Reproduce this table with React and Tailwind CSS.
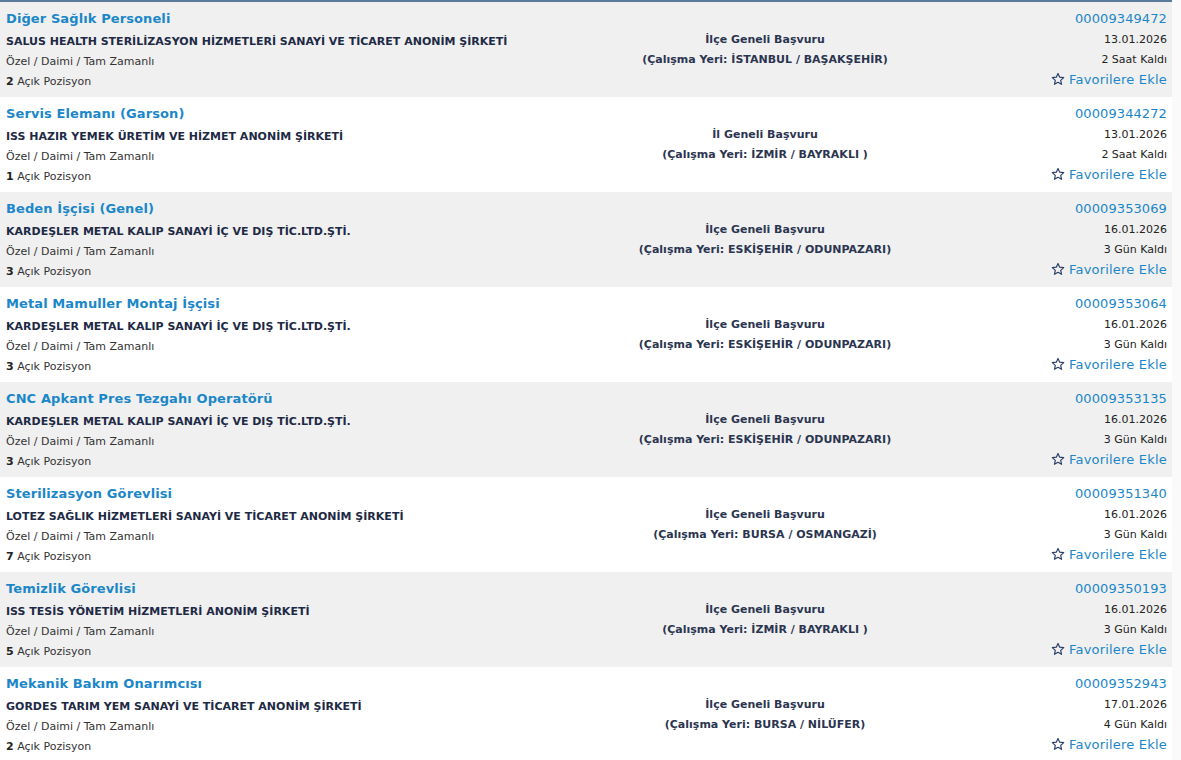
import React from "react";

const rows = [
  { title: "Diğer Sağlık Personeli", company: "SALUS HEALTH STERİLİZASYON HİZMETLERİ SANAYİ VE TİCARET ANONİM ŞİRKETİ", pos: 2, scope: "İlçe Geneli Başvuru", place: "(Çalışma Yeri: İSTANBUL / BAŞAKŞEHİR)", id: "00009349472", date: "13.01.2026", left: "2 Saat Kaldı" },
  { title: "Servis Elemanı (Garson)", company: "ISS HAZIR YEMEK ÜRETİM VE HİZMET ANONİM ŞİRKETİ", pos: 1, scope: "İl Geneli Başvuru", place: "(Çalışma Yeri: İZMİR / BAYRAKLI )", id: "00009344272", date: "13.01.2026", left: "2 Saat Kaldı" },
  { title: "Beden İşçisi (Genel)", company: "KARDEŞLER METAL KALIP SANAYİ İÇ VE DIŞ TİC.LTD.ŞTİ.", pos: 3, scope: "İlçe Geneli Başvuru", place: "(Çalışma Yeri: ESKİŞEHİR / ODUNPAZARI)", id: "00009353069", date: "16.01.2026", left: "3 Gün Kaldı" },
  { title: "Metal Mamuller Montaj İşçisi", company: "KARDEŞLER METAL KALIP SANAYİ İÇ VE DIŞ TİC.LTD.ŞTİ.", pos: 3, scope: "İlçe Geneli Başvuru", place: "(Çalışma Yeri: ESKİŞEHİR / ODUNPAZARI)", id: "00009353064", date: "16.01.2026", left: "3 Gün Kaldı" },
  { title: "CNC Apkant Pres Tezgahı Operatörü", company: "KARDEŞLER METAL KALIP SANAYİ İÇ VE DIŞ TİC.LTD.ŞTİ.", pos: 3, scope: "İlçe Geneli Başvuru", place: "(Çalışma Yeri: ESKİŞEHİR / ODUNPAZARI)", id: "00009353135", date: "16.01.2026", left: "3 Gün Kaldı" },
  { title: "Sterilizasyon Görevlisi", company: "LOTEZ SAĞLIK HİZMETLERİ SANAYİ VE TİCARET ANONİM ŞİRKETİ", pos: 7, scope: "İlçe Geneli Başvuru", place: "(Çalışma Yeri: BURSA / OSMANGAZİ)", id: "00009351340", date: "16.01.2026", left: "3 Gün Kaldı" },
  { title: "Temizlik Görevlisi", company: "ISS TESİS YÖNETİM HİZMETLERİ ANONİM ŞİRKETİ", pos: 5, scope: "İlçe Geneli Başvuru", place: "(Çalışma Yeri: İZMİR / BAYRAKLI )", id: "00009350193", date: "16.01.2026", left: "3 Gün Kaldı" },
  { title: "Mekanik Bakım Onarımcısı", company: "GORDES TARIM YEM SANAYİ VE TİCARET ANONİM ŞİRKETİ", pos: 2, scope: "İlçe Geneli Başvuru", place: "(Çalışma Yeri: BURSA / NİLÜFER)", id: "00009352943", date: "17.01.2026", left: "4 Gün Kaldı" },
];

function StarIcon() {
  return (
    <svg width="14" height="14" viewBox="0 0 24 24" className="mr-[4px] mt-[-2px]">
      <polygon
        points="12,2.5 14.9,8.9 21.8,9.6 16.6,14.3 18.1,21.1 12,17.6 5.9,21.1 7.4,14.3 2.2,9.6 9.1,8.9"
        fill="none"
        stroke="#2b3f66"
        strokeWidth="2"
        strokeLinejoin="round"
      />
    </svg>
  );
}

export default function App() {
  return (
    <div className="w-[1181px] h-[760px] overflow-hidden bg-[#fbfbfb] flex" style={{ fontFamily: '"DejaVu Sans", Verdana, sans-serif' }}>
      <div className="w-[1172px] shrink-0 border-t-2 border-[#5a7b9c] bg-white">
        {rows.map((r, i) => (
          <div
            key={i}
            className={`grid grid-cols-[594px_330px_1fr] h-[95px] pl-[6px] pr-[5px] ${i % 2 === 0 ? "bg-[#f0f0f0]" : "bg-white"}`}
          >
            <div className="flex flex-col pt-[7px] min-w-0">
              <div className="text-[13px] font-bold text-[#1b87c9] leading-[20px] h-[23px] tracking-[0.1px] whitespace-nowrap">{r.title}</div>
              <div className="text-[11px] font-bold text-[#1e2a45] leading-[20px] whitespace-nowrap">{r.company}</div>
              <div className="text-[11px] text-[#333] leading-[20px] whitespace-nowrap">Özel / Daimi / Tam Zamanlı</div>
              <div className="text-[11px] text-[#333] leading-[20px] whitespace-nowrap">
                <span className="font-bold text-[#222]">{r.pos}</span> Açık Pozisyon
              </div>
            </div>
            <div className="flex flex-col items-center pt-[28px] text-[11px] font-bold text-[#2b3550] leading-[20px] whitespace-nowrap">
              <div>{r.scope}</div>
              <div>{r.place}</div>
            </div>
            <div className="flex flex-col items-end pt-[7px]">
              <div className="text-[13px] text-[#1b87c9] leading-[20px] h-[21px] tracking-[0.1px]">{r.id}</div>
              <div className="text-[11px] text-[#222] leading-[20px]">{r.date}</div>
              <div className="text-[11px] text-[#222] leading-[20px]">{r.left}</div>
              <div className="flex items-center text-[13px] text-[#1b87c9] leading-[20px] tracking-[0.2px]">
                <StarIcon />
                Favorilere Ekle
              </div>
            </div>
          </div>
        ))}
      </div>
      <div className="flex-1 bg-[#fafafa]" />
    </div>
  );
}
